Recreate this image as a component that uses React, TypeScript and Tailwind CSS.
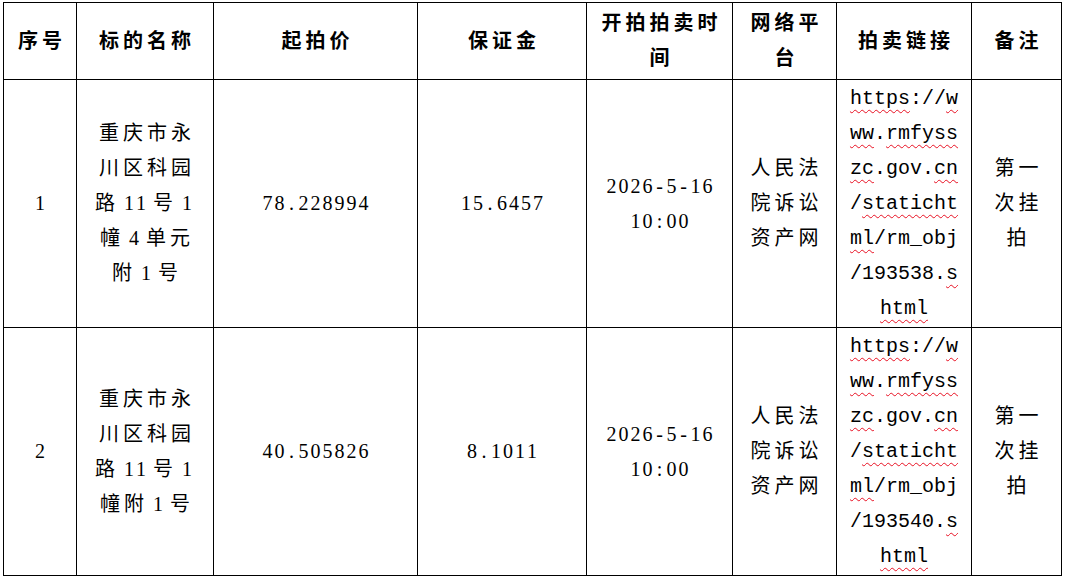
const serif = "font-['Liberation_Serif','Noto_Sans_CJK_SC',serif]";
const mono = "font-['Liberation_Mono','Noto_Sans_CJK_SC',monospace]";
const squiggle =
  "underline decoration-wavy decoration-[#e81123] decoration-1 underline-offset-[5px]";

type Seg = string | { u: string };
type Row = {
  no: string;
  name: Seg[][];
  price: string;
  deposit: string;
  url: Seg[][];
};

const headers: string[][] = [
  ["序号"],
  ["标的名称"],
  ["起拍价"],
  ["保证金"],
  ["开拍拍卖时", "间"],
  ["网络平", "台"],
  ["拍卖链接"],
  ["备注"],
];

const urlLines = (id: string): Seg[][] => [
  [{ u: "https" }, "://", { u: "w" }],
  [{ u: "ww" }, ".", { u: "rmfyss" }],
  [{ u: "zc" }, ".gov.", { u: "cn" }],
  ["/", { u: "staticht" }],
  [{ u: "ml" }, "/rm_obj"],
  [`/${id}.`, { u: "s" }],
  [{ u: "html" }],
];

const rows: Row[] = [
  {
    no: "1",
    name: [["重庆市永"], ["川区科园"], ["路", "11", "号", "1"], ["幢", "4", "单元"], ["附", "1", "号"]],
    price: "78.228994",
    deposit: "15.6457",
    url: urlLines("193538"),
  },
  {
    no: "2",
    name: [["重庆市永"], ["川区科园"], ["路", "11", "号", "1"], ["幢附", "1", "号"]],
    price: "40.505826",
    deposit: "8.1011",
    url: urlLines("193540"),
  },
];

function Cell({ children, className = "" }: { children: React.ReactNode; className?: string }) {
  return (
    <div
      className={`bg-white flex flex-col items-center justify-center text-center text-[20px] leading-[35px] text-black ${className}`}
    >
      {children}
    </div>
  );
}

// half-width digits: every character sits in a fixed 12px box, like the song-ti grid
function Half({ text }: { text: string }) {
  return (
    <>
      {text.split("").map((ch, i) => (
        <span key={i} className="inline-block w-[12px] text-center">
          {ch}
        </span>
      ))}
    </>
  );
}

function Name({ segs }: { segs: Seg[] }) {
  return (
    <div className="whitespace-nowrap">
      {segs.map((s, i) =>
        typeof s !== "string" ? null : /^[0-9]+$/.test(s) ? (
          <span key={i} className="ml-[4px] mr-[6px] inline-block">
            <Half text={s} />
          </span>
        ) : (
          <span key={i} className="tracking-[4px]">
            {s}
          </span>
        )
      )}
    </div>
  );
}

function Url({ lines }: { lines: Seg[][] }) {
  return (
    <>
      {lines.map((line, i) => (
        <div key={i} className={`${mono} whitespace-pre leading-[35px]`}>
          {line.map((s, j) =>
            typeof s === "string" ? (
              <span key={j}>{s}</span>
            ) : (
              <span key={j} className={squiggle}>
                {s.u}
              </span>
            )
          )}
        </div>
      ))}
    </>
  );
}

export default function App() {
  return (
    <div className={`min-h-screen bg-white pl-[3px] pt-[2px] ${serif}`}>
      <div className="grid w-max grid-cols-[72px_136px_203px_168px_145px_103px_134px_89px] grid-rows-[76px_247px_247px] gap-px bg-black p-px">
        {headers.map((h, i) => (
          <Cell key={i} className="font-bold tracking-[4px] pl-[4px]">
            {h.map((line) => (
              <div key={line}>{line}</div>
            ))}
          </Cell>
        ))}

        {rows.map((r) => (
          <div key={r.no} className="contents">
            <Cell>
              <div>
                <Half text={r.no} />
              </div>
            </Cell>
            <Cell className="pl-[4px]">
              {r.name.map((segs, i) => (
                <Name key={i} segs={segs} />
              ))}
            </Cell>
            <Cell>
              <div className="whitespace-nowrap">
                <Half text={r.price} />
              </div>
            </Cell>
            <Cell>
              <div className="whitespace-nowrap">
                <Half text={r.deposit} />
              </div>
            </Cell>
            <Cell>
              <div className="whitespace-nowrap">
                <Half text="2026-5-16" />
              </div>
              <div className="whitespace-nowrap">
                <Half text="10:00" />
              </div>
            </Cell>
            <Cell className="tracking-[4px] pl-[4px]">
              <div>人民法</div>
              <div>院诉讼</div>
              <div>资产网</div>
            </Cell>
            <Cell>
              <Url lines={r.url} />
            </Cell>
            <Cell className="tracking-[4px] pl-[4px]">
              <div>第一</div>
              <div>次挂</div>
              <div>拍</div>
            </Cell>
          </div>
        ))}
      </div>
    </div>
  );
}
